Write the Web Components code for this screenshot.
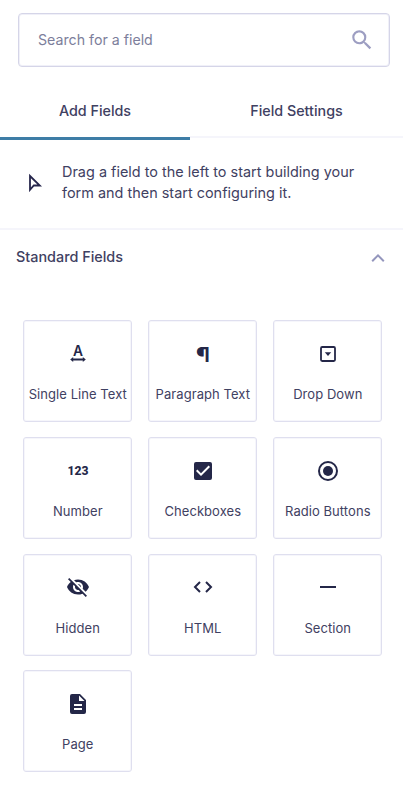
<!DOCTYPE html>
<html lang="en">
<head>
<meta charset="utf-8">
<title>Form Fields</title>
<style>
body {
  margin: 0;
  background: #fff;
  color: #3f4162;
  font-family: Inter, "Open Sans", sans-serif;
}
</style>
</head>
<body>
<fields-panel>
  <search-box slot="search" placeholder="Search for a field"></search-box>
  <panel-tabs slot="tabs">
    <panel-tab active>Add Fields</panel-tab>
    <panel-tab>Field Settings</panel-tab>
  </panel-tabs>
  <panel-hint slot="hint">Drag a field to the left to start building your form and then start configuring it.</panel-hint>
  <field-group label="Standard Fields">
    <field-tile icon="text">Single Line Text</field-tile>
    <field-tile icon="paragraph">Paragraph Text</field-tile>
    <field-tile icon="dropdown">Drop Down</field-tile>
    <field-tile icon="number">Number</field-tile>
    <field-tile icon="checkbox">Checkboxes</field-tile>
    <field-tile icon="radio">Radio Buttons</field-tile>
    <field-tile icon="hidden">Hidden</field-tile>
    <field-tile icon="html">HTML</field-tile>
    <field-tile icon="section">Section</field-tile>
    <field-tile icon="page">Page</field-tile>
  </field-group>
</fields-panel>

<script>
const icons = {
  text: `<text x="7" y="13.7" font-size="14" font-weight="600" textLength="10" lengthAdjust="spacingAndGlyphs">A</text><path d="M4.2 17.5l3-2.5v1.6h9.6V15l3 2.5-3 2.5v-1.6H7.2V20z"/>`,
  paragraph: `<text x="5" y="19.7" font-size="20" font-weight="700" textLength="14" lengthAdjust="spacingAndGlyphs">¶</text>`,
  dropdown: `<rect x="5" y="5" width="14" height="14" rx="1.2" fill="none" stroke="currentColor" stroke-width="1.8"/><path d="M8.8 10.2h6.4L12 14z"/>`,
  number: `<text x="1.5" y="16.2" font-size="13.6" font-weight="800" font-family="Roboto, sans-serif" textLength="21" lengthAdjust="spacingAndGlyphs">123</text>`,
  checkbox: `<path d="M19 3H5a2 2 0 0 0-2 2v14a2 2 0 0 0 2 2h14a2 2 0 0 0 2-2V5a2 2 0 0 0-2-2zm-9 14l-5-5 1.41-1.41L10 14.17l7.59-7.59L19 8z"/>`,
  radio: `<circle cx="12" cy="12" r="9" fill="none" stroke="currentColor" stroke-width="2"/><circle cx="12" cy="12" r="5"/>`,
  hidden: `<path d="M12 7c2.76 0 5 2.24 5 5 0 .65-.13 1.26-.36 1.83l2.92 2.92c1.51-1.26 2.7-2.89 3.43-4.75-1.73-4.39-6-7.5-11-7.5-1.4 0-2.74.25-3.98.7l2.16 2.16C10.74 7.13 11.35 7 12 7zM2 4.27l2.28 2.28.46.46C3.08 8.3 1.78 10.02 1 12c1.73 4.39 6 7.5 11 7.5 1.55 0 3.03-.3 4.38-.84l.42.42L19.73 22 21 20.73 3.27 3 2 4.27zM7.53 9.8l1.55 1.55c-.05.21-.08.43-.08.65 0 1.66 1.34 3 3 3 .22 0 .44-.03.65-.08l1.55 1.55c-.67.33-1.41.53-2.2.53-2.76 0-5-2.24-5-5 0-.79.2-1.53.53-2.2zm4.31-.78l3.15 3.15.02-.16c0-1.66-1.34-3-3-3l-.17.01z"/>`,
  html: `<path d="M9 7l-5 5 5 5M15 7l5 5-5 5" fill="none" stroke="currentColor" stroke-width="2"/>`,
  section: `<path d="M4 11h16v2H4z"/>`,
  page: `<path d="M14 2H6a2 2 0 0 0-2 2v16a2 2 0 0 0 2 2h12a2 2 0 0 0 2-2V8zm2 16H8v-2h8zm0-4H8v-2h8zm-3-5V3.5L18.5 9z"/>`
};

const panelTemplate = document.createElement("template");
panelTemplate.innerHTML = `
<style>
:host {
  display: block;
}
.search {
  padding: 13px 13px 19px 18px;
}
</style>
<div class="search"><slot name="search"></slot></div>
<slot name="tabs"></slot>
<slot name="hint"></slot>
<slot></slot>`;

class FieldsPanel extends HTMLElement {
  constructor() {
    super();
    this.attachShadow({ mode: "open" });
    this.shadowRoot.appendChild(panelTemplate.content.cloneNode(true));
  }
}

const searchTemplate = document.createElement("template");
searchTemplate.innerHTML = `
<style>
:host {
  display: flex;
  align-items: center;
  justify-content: space-between;
  box-sizing: border-box;
  height: 54px;
  padding: 0 14px 0 19px;
  border: 1px solid #d5d5e8;
  border-radius: 4px;
  box-shadow: inset 0 0 0 1px #f0f0f8;
  color: #7c7e9b;
  font-size: 14.2px;
}
span {
  padding-bottom: 2px;
}
svg {
  width: 26px;
  height: 26px;
  fill: #9d9ec2;
}
</style>
<span></span>
<svg viewBox="0 0 24 24"><path d="M15.5 14h-.79l-.28-.27A6.47 6.47 0 0 0 16 9.5 6.5 6.5 0 1 0 9.5 16c1.61 0 3.09-.59 4.23-1.57l.27.28v.79l5 4.99L20.49 19l-4.99-5zm-6 0C7.01 14 5 11.99 5 9.5S7.01 5 9.5 5 14 7.01 14 9.5 11.99 14 9.5 14z"/></svg>`;

class SearchBox extends HTMLElement {
  constructor() {
    super();
    this.attachShadow({ mode: "open" });
    this.shadowRoot.appendChild(searchTemplate.content.cloneNode(true));
    this.shadowRoot.querySelector("span").textContent = this.getAttribute("placeholder");
  }
}

const tabsTemplate = document.createElement("template");
tabsTemplate.innerHTML = `
<style>
:host {
  display: grid;
  grid-template-columns: 190px 1fr;
  height: 54px;
}
</style>
<slot></slot>`;

class PanelTabs extends HTMLElement {
  constructor() {
    super();
    this.attachShadow({ mode: "open" });
    this.shadowRoot.appendChild(tabsTemplate.content.cloneNode(true));
  }
}

const tabTemplate = document.createElement("template");
tabTemplate.innerHTML = `
<style>
:host {
  display: flex;
  justify-content: center;
  box-sizing: border-box;
  height: 52px;
  padding-top: 16px;
  border-bottom: 2px solid #f5f5fb;
  font-size: 14.3px;
  line-height: 18px;
  font-weight: 450;
}
:host([active]) {
  height: 54px;
  border-bottom: 3px solid #3e7da6;
}
</style>
<slot></slot>`;

class PanelTab extends HTMLElement {
  constructor() {
    super();
    this.attachShadow({ mode: "open" });
    this.shadowRoot.appendChild(tabTemplate.content.cloneNode(true));
  }
}

const hintTemplate = document.createElement("template");
hintTemplate.innerHTML = `
<style>
:host {
  display: flex;
  align-items: center;
  gap: 19px;
  box-sizing: border-box;
  height: 90px;
  padding: 0 40px 4px 27px;
  border-bottom: 2px solid #f5f5fb;
  font-size: 14.45px;
  line-height: 21px;
}
svg {
  flex: none;
  width: 16px;
  height: 20px;
}
p {
  margin: 0;
}
</style>
<svg viewBox="0 0 16 20" fill="none" stroke="#26264c" stroke-width="1.8"><path d="M3 4v13.8l3.8-4.3h6z"/></svg>
<p><slot></slot></p>`;

class PanelHint extends HTMLElement {
  constructor() {
    super();
    this.attachShadow({ mode: "open" });
    this.shadowRoot.appendChild(hintTemplate.content.cloneNode(true));
  }
}

const groupTemplate = document.createElement("template");
groupTemplate.innerHTML = `
<style>
:host {
  display: block;
}
header {
  display: flex;
  align-items: center;
  justify-content: space-between;
  height: 55px;
  padding: 0 18px 0 16px;
}
h2 {
  margin: 0;
  padding-bottom: 2px;
  font-size: 14.4px;
  font-weight: 550;
}
svg {
  width: 14px;
  height: 10px;
}
.tiles {
  display: grid;
  grid-template-columns: repeat(3, 109px);
  grid-auto-rows: 102px;
  gap: 14.7px 16px;
  padding: 35.3px 0 15px 23.3px;
}
</style>
<header>
  <h2></h2>
  <svg viewBox="0 0 14 10" fill="none" stroke="#9496bd" stroke-width="2"><path d="M1.2 8.2L7 2.4l5.8 5.8"/></svg>
</header>
<div class="tiles"><slot></slot></div>`;

class FieldGroup extends HTMLElement {
  constructor() {
    super();
    this.attachShadow({ mode: "open" });
    this.shadowRoot.appendChild(groupTemplate.content.cloneNode(true));
    this.shadowRoot.querySelector("h2").textContent = this.getAttribute("label");
  }
}

const tileTemplate = document.createElement("template");
tileTemplate.innerHTML = `
<style>
:host {
  display: flex;
  flex-direction: column;
  align-items: center;
  gap: 20.2px;
  box-sizing: border-box;
  padding-top: 20.8px;
  border: 1px solid #dfdfef;
  border-radius: 3px;
  box-shadow: inset 0 0 0 1px #f6f6fb;
  font-size: 13px;
  line-height: 16px;
  letter-spacing: 0.06px;
  white-space: nowrap;
}
svg {
  flex: none;
  width: 24px;
  height: 24px;
  overflow: visible;
  color: #242748;
  fill: currentColor;
  letter-spacing: 0;
}
</style>
<svg viewBox="0 0 24 24"></svg>
<span><slot></slot></span>`;

class FieldTile extends HTMLElement {
  constructor() {
    super();
    this.attachShadow({ mode: "open" });
    this.shadowRoot.appendChild(tileTemplate.content.cloneNode(true));
    this.shadowRoot.querySelector("svg").innerHTML = icons[this.getAttribute("icon")];
  }
}

customElements.define("fields-panel", FieldsPanel);
customElements.define("search-box", SearchBox);
customElements.define("panel-tabs", PanelTabs);
customElements.define("panel-tab", PanelTab);
customElements.define("panel-hint", PanelHint);
customElements.define("field-group", FieldGroup);
customElements.define("field-tile", FieldTile);
</script>
</body>
</html>
